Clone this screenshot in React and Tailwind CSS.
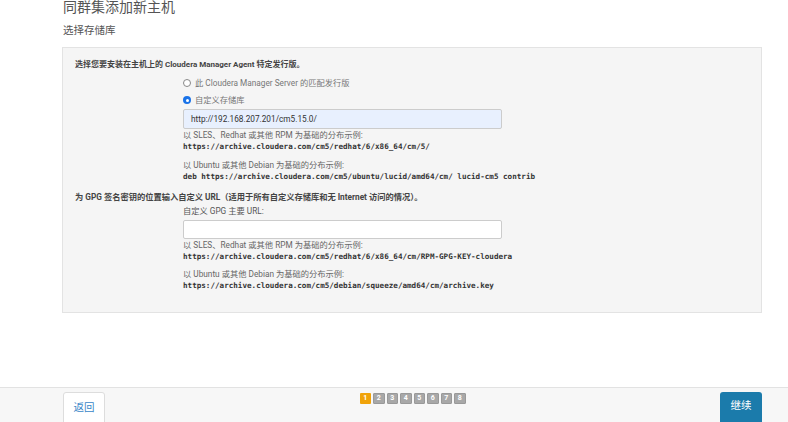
import React from "react";

const F = { fontFamily: 'Roboto, "Noto Sans CJK SC", sans-serif' };
const M = { fontFamily: '"DejaVu Sans Mono", "Liberation Mono", monospace' };

function Radio({ checked, label }) {
  return (
    <div className="flex items-center h-[12px] text-[8.25px] text-[#777]">
      {checked ? (
        <span className="w-[8px] h-[8px] rounded-full bg-[#1a73e8] flex items-center justify-center">
          <span className="w-[3px] h-[3px] rounded-full bg-white" />
        </span>
      ) : (
        <span className="w-[8px] h-[8px] rounded-full border border-[#888] bg-white" />
      )}
      <span className="ml-[4px]">{label}</span>
    </div>
  );
}

function Example({ label, code }) {
  return (
    <div>
      <div className="h-[12px] leading-[12px] text-[8.25px] text-[#666]">{label}</div>
      <div className="h-[12px] leading-[12px] text-[7.6px] font-bold text-[#333] whitespace-nowrap" style={M}>
        {code}
      </div>
    </div>
  );
}

export default function App() {
  return (
    <div className="w-[788px] h-[422px] overflow-hidden bg-white" style={F}>
      <div className="h-[387px] pl-[62px]">
        <div className="h-[14px] leading-[14px] text-[14px] text-[#555] pl-[1px]">同群集添加新主机</div>
        <div className="mt-[10px] h-[14px] leading-[14px] text-[10.5px] text-[#555] pl-[1px]">选择存储库</div>
        <div className="mt-[9px] w-[700px] h-[266px] bg-[#f5f5f5] border border-[#e3e3e3] pl-[12px] pt-[11px]">
          <div className="h-[12px] leading-[12px] text-[8px] font-bold text-[#444]">
            选择您要安装在主机上的 Cloudera Manager Agent 特定发行版。
          </div>
          <div className="pl-[108px]">
            <div className="mt-[6px]">
              <Radio label="此 Cloudera Manager Server 的匹配发行版" />
            </div>
            <div className="mt-[5px]">
              <Radio checked label="自定义存储库" />
            </div>
            <div className="mt-[3px] w-[319px] h-[20px] bg-[#e8f0fe] border border-[#ccc] rounded-[2px] flex items-center pl-[7px] text-[8.25px] text-[#333]">
              http://192.168.207.201/cm5.15.0/
            </div>
            <Example
              label="以 SLES、Redhat 或其他 RPM 为基础的分布示例:"
              code="https://archive.cloudera.com/cm5/redhat/6/x86_64/cm/5/"
            />
            <div className="mt-[6px]">
              <Example
                label="以 Ubuntu 或其他 Debian 为基础的分布示例:"
                code="deb https://archive.cloudera.com/cm5/ubuntu/lucid/amd64/cm/ lucid-cm5 contrib"
              />
            </div>
          </div>
          <div className="mt-[8px] h-[12px] leading-[12px] text-[8.25px] font-bold text-[#444]">
            为 GPG 签名密钥的位置输入自定义 URL（适用于所有自定义存储库和无 Internet 访问的情况）。
          </div>
          <div className="pl-[108px]">
            <div className="mt-[2px] h-[12px] leading-[12px] text-[8.25px] text-[#555]">自定义 GPG 主要 URL:</div>
            <div className="mt-[3px] w-[319px] h-[19px] bg-white border border-[#ccc] rounded-[2px]" />
            <Example
              label="以 SLES、Redhat 或其他 RPM 为基础的分布示例:"
              code="https://archive.cloudera.com/cm5/redhat/6/x86_64/cm/RPM-GPG-KEY-cloudera"
            />
            <div className="mt-[5px]">
              <Example
                label="以 Ubuntu 或其他 Debian 为基础的分布示例:"
                code="https://archive.cloudera.com/cm5/debian/squeeze/amd64/cm/archive.key"
              />
            </div>
          </div>
        </div>
      </div>
      <div className="h-[60px] bg-[#f7f7f7] border-t border-[#e2e2e2] flex items-start pl-[63px] pr-[26px] pt-[4px]">
        <div className="w-[42px] h-[40px] bg-white border border-[#ddd] rounded-[3px] flex justify-center pt-[7px] text-[10.5px] text-[#3a87c8]">
          返回
        </div>
        <div className="flex-1 flex justify-center pt-[1px]">
          <div className="flex gap-[2px]">
            {[1, 2, 3, 4, 5, 6, 7, 8].map((n) => (
              <div
                key={n}
                className={
                  "w-[11.5px] h-[11px] rounded-[1px] flex items-center justify-center text-[7px] font-bold text-white " +
                  (n === 1 ? "bg-[#f0a30a]" : "bg-[#a8a8a8] border border-[#999]")
                }
              >
                {n}
              </div>
            ))}
          </div>
        </div>
        <div className="w-[42px] h-[40px] bg-[#1b7bab] rounded-[3px] flex justify-center pt-[6px] text-[10.5px] text-white">
          继续
        </div>
      </div>
    </div>
  );
}
